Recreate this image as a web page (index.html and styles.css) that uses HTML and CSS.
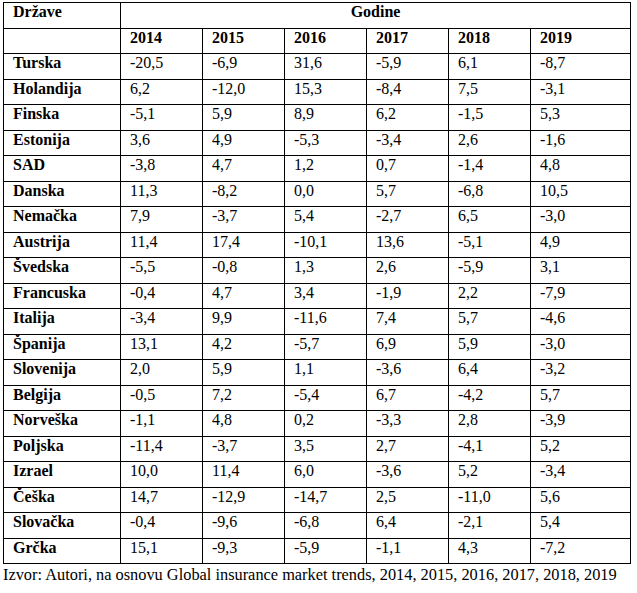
FILE: index.html
```html
<!DOCTYPE html>
<html lang="sr">
<head>
<meta charset="utf-8">
<title>Tabela</title>
<link rel="stylesheet" href="styles.css">
</head>
<body>
<table class="data">
  <colgroup>
    <col class="c-country">
    <col class="c-y"><col class="c-y"><col class="c-y"><col class="c-y"><col class="c-y">
    <col class="c-last">
  </colgroup>
  <tr><th>Države</th><th colspan="6" class="center">Godine</th></tr>
  <tr><th></th><th>2014</th><th>2015</th><th>2016</th><th>2017</th><th>2018</th><th>2019</th></tr>
  <tr><th>Turska</th><td>-20,5</td><td>-6,9</td><td>31,6</td><td>-5,9</td><td>6,1</td><td>-8,7</td></tr>
  <tr><th>Holandija</th><td>6,2</td><td>-12,0</td><td>15,3</td><td>-8,4</td><td>7,5</td><td>-3,1</td></tr>
  <tr><th>Finska</th><td>-5,1</td><td>5,9</td><td>8,9</td><td>6,2</td><td>-1,5</td><td>5,3</td></tr>
  <tr><th>Estonija</th><td>3,6</td><td>4,9</td><td>-5,3</td><td>-3,4</td><td>2,6</td><td>-1,6</td></tr>
  <tr><th>SAD</th><td>-3,8</td><td>4,7</td><td>1,2</td><td>0,7</td><td>-1,4</td><td>4,8</td></tr>
  <tr><th>Danska</th><td>11,3</td><td>-8,2</td><td>0,0</td><td>5,7</td><td>-6,8</td><td>10,5</td></tr>
  <tr><th>Nemačka</th><td>7,9</td><td>-3,7</td><td>5,4</td><td>-2,7</td><td>6,5</td><td>-3,0</td></tr>
  <tr><th>Austrija</th><td>11,4</td><td>17,4</td><td>-10,1</td><td>13,6</td><td>-5,1</td><td>4,9</td></tr>
  <tr><th>Švedska</th><td>-5,5</td><td>-0,8</td><td>1,3</td><td>2,6</td><td>-5,9</td><td>3,1</td></tr>
  <tr><th>Francuska</th><td>-0,4</td><td>4,7</td><td>3,4</td><td>-1,9</td><td>2,2</td><td>-7,9</td></tr>
  <tr><th>Italija</th><td>-3,4</td><td>9,9</td><td>-11,6</td><td>7,4</td><td>5,7</td><td>-4,6</td></tr>
  <tr><th>Španija</th><td>13,1</td><td>4,2</td><td>-5,7</td><td>6,9</td><td>5,9</td><td>-3,0</td></tr>
  <tr><th>Slovenija</th><td>2,0</td><td>5,9</td><td>1,1</td><td>-3,6</td><td>6,4</td><td>-3,2</td></tr>
  <tr><th>Belgija</th><td>-0,5</td><td>7,2</td><td>-5,4</td><td>6,7</td><td>-4,2</td><td>5,7</td></tr>
  <tr><th>Norveška</th><td>-1,1</td><td>4,8</td><td>0,2</td><td>-3,3</td><td>2,8</td><td>-3,9</td></tr>
  <tr><th>Poljska</th><td>-11,4</td><td>-3,7</td><td>3,5</td><td>2,7</td><td>-4,1</td><td>5,2</td></tr>
  <tr><th>Izrael</th><td>10,0</td><td>11,4</td><td>6,0</td><td>-3,6</td><td>5,2</td><td>-3,4</td></tr>
  <tr><th>Češka</th><td>14,7</td><td>-12,9</td><td>-14,7</td><td>2,5</td><td>-11,0</td><td>5,6</td></tr>
  <tr><th>Slovačka</th><td>-0,4</td><td>-9,6</td><td>-6,8</td><td>6,4</td><td>-2,1</td><td>5,4</td></tr>
  <tr><th>Grčka</th><td>15,1</td><td>-9,3</td><td>-5,9</td><td>-1,1</td><td>4,3</td><td>-7,2</td></tr>
</table>
<p class="source">Izvor: Autori, na osnovu Global insurance market trends, 2014, 2015, 2016, 2017, 2018, 2019</p>
</body>
</html>
```
FILE: styles.css
```css
html, body {
  margin: 0;
  padding: 0;
  background: #ffffff;
}
body {
  font-family: "Liberation Serif", "Times New Roman", serif;
  color: #000000;
  padding: 2px 0 0 3px;
}
.data {
  border-collapse: collapse;
  table-layout: fixed;
  width: 628px;
  font-size: 16px;
}
.c-country { width: 117px; }
.c-y { width: 82px; }
.c-last { width: 100px; }
.data tr { height: 25.5px; }
.data th, .data td {
  border: 1px solid #000000;
  padding: 0 9px;
  text-align: left;
  vertical-align: top;
  line-height: 18px;
  white-space: nowrap;
}
.data th { font-weight: bold; }
.data td { font-weight: normal; }
.data th.center { text-align: center; }
.source {
  margin: 1px 0 0 0;
  font-size: 16.35px;
  line-height: 19px;
}
```
